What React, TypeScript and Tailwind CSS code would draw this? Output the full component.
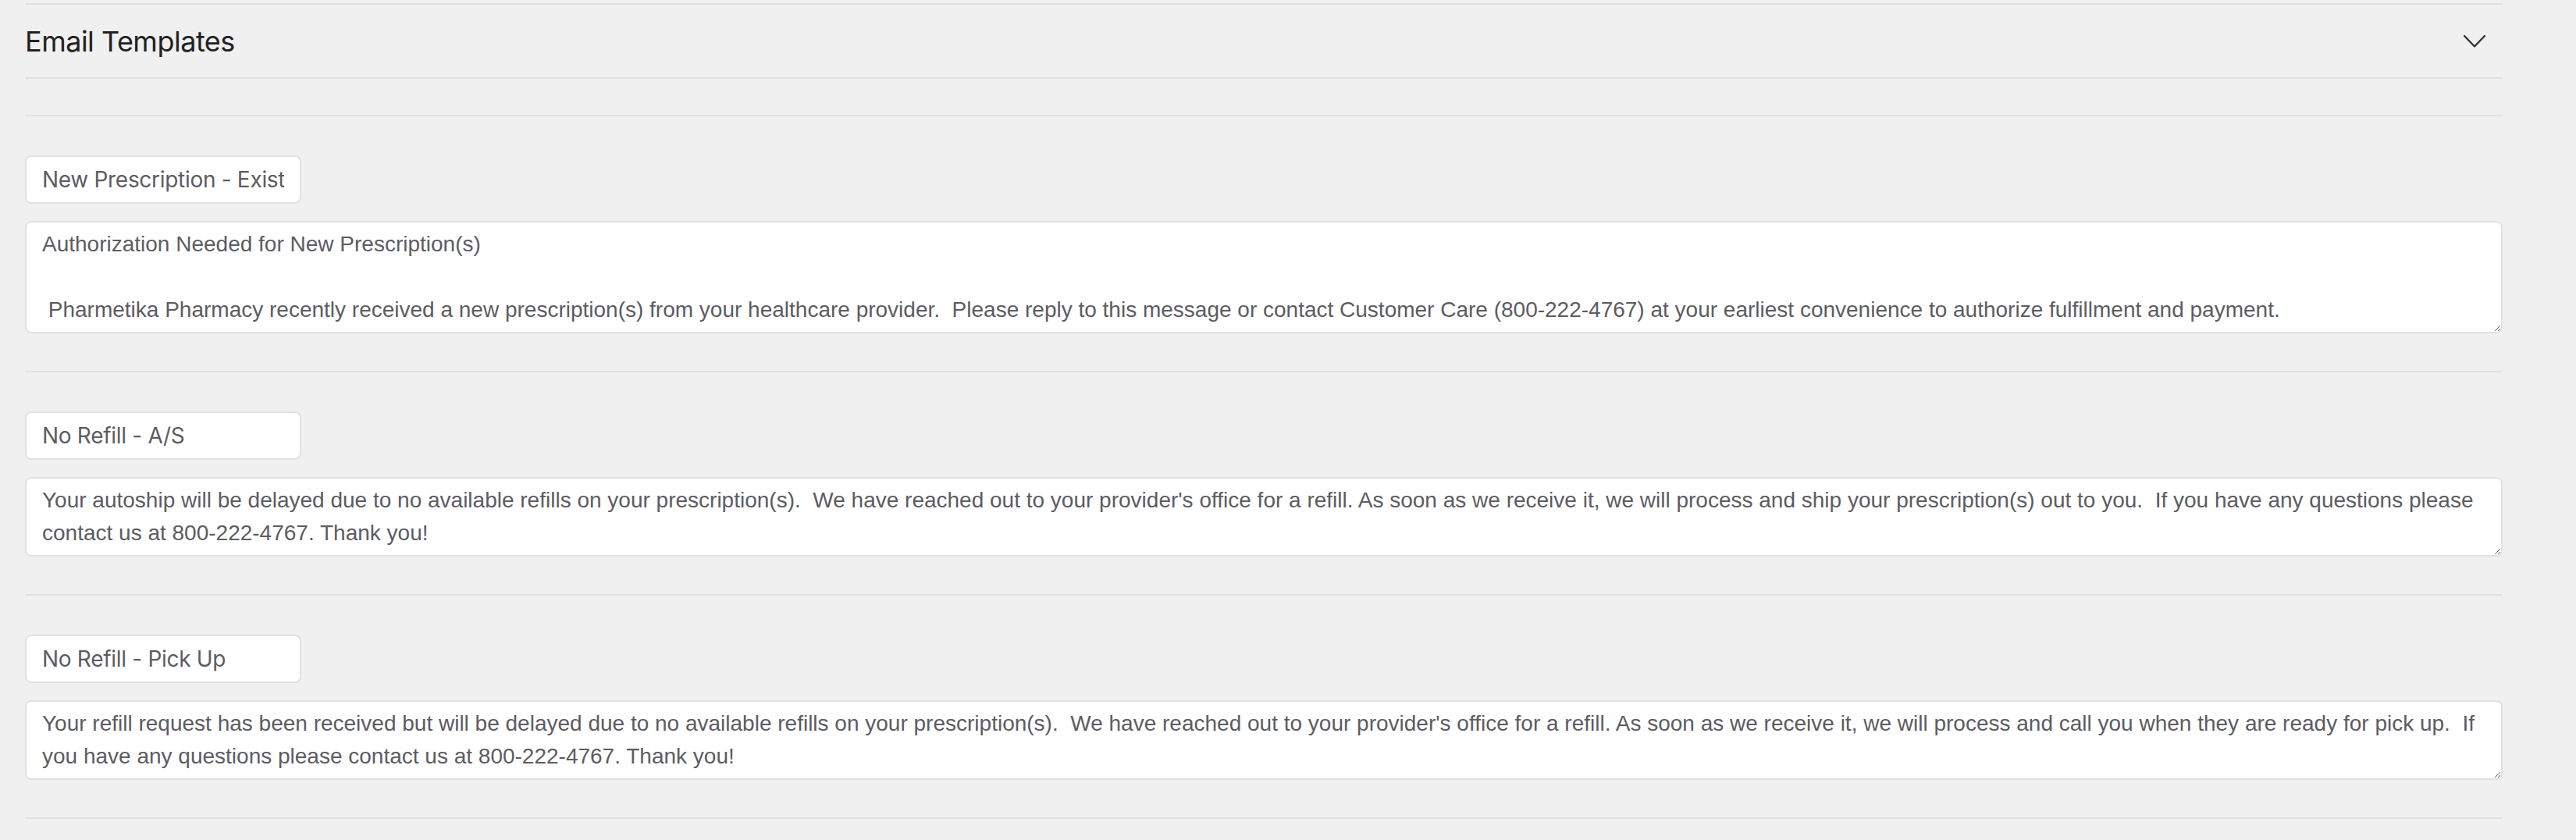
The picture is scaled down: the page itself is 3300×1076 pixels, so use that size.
import { useState } from "react";

const templates = [
  {
    name: "New Prescription - Existing",
    body: "Authorization Needed for New Prescription(s)\n\n Pharmetika Pharmacy recently received a new prescription(s) from your healthcare provider.  Please reply to this message or contact Customer Care (800-222-4767) at your earliest convenience to authorize fulfillment and payment.",
    height: "h-[144px]",
  },
  {
    name: "No Refill - A/S",
    body: "Your autoship will be delayed due to no available refills on your prescription(s).  We have reached out to your provider's office for a refill. As soon as we receive it, we will process and ship your prescription(s) out to you.  If you have any questions please contact us at 800-222-4767. Thank you!",
    height: "h-[102px]",
  },
  {
    name: "No Refill - Pick Up",
    body: "Your refill request has been received but will be delayed due to no available refills on your prescription(s).  We have reached out to your provider's office for a refill. As soon as we receive it, we will process and call you when they are ready for pick up.  If you have any questions please contact us at 800-222-4767. Thank you!",
    height: "h-[102px]",
  },
];

function Chevron() {
  return (
    <svg width="30" height="18" viewBox="0 0 30 18" fill="none">
      <polyline
        points="2,2 15,15.5 28,2"
        stroke="#333"
        strokeWidth="2.4"
        strokeLinecap="round"
        strokeLinejoin="round"
      />
    </svg>
  );
}

export default function App() {
  const [open, setOpen] = useState(true);

  return (
    <div className="min-h-screen bg-[#f0f0f0] pl-[32px] pr-[94px] pt-[4px]">
      <section className="border-t-2 border-[#dee0e5]">
        {/* Header */}
        <button
          type="button"
          onClick={() => setOpen(!open)}
          className="flex h-[93px] w-full items-center justify-between pr-[21px] text-left"
        >
          <h2 className="font-['Inter',sans-serif] text-[36px] tracking-[-0.5px] text-[#222]">
            Email Templates
          </h2>
          <Chevron />
        </button>

        <div className="h-[50px] border-y-2 border-[#dee0e5]" />

        {/* Template rows */}
        {open &&
          templates.map((t) => (
            <div key={t.name} className="border-b-2 border-[#dee0e5] pt-[50px] pb-[48px]">
              <input
                type="text"
                defaultValue={t.name}
                className="h-[62px] w-[354px] rounded-[8px] border-2 border-[#dfe1e6] bg-white px-[20px] font-['Inter',sans-serif] text-[28px] tracking-[-0.3px] text-[#5c5c62] outline-none"
              />
              <textarea
                defaultValue={t.body}
                className={`mt-[22px] block w-full ${t.height} rounded-[8px] border-2 border-[#dfe1e6] bg-white px-[20px] py-[7px] font-['Liberation_Sans',Arial,sans-serif] text-[28px] leading-[42px] text-[#5c5c62] outline-none`}
              />
            </div>
          ))}
      </section>
    </div>
  );
}
